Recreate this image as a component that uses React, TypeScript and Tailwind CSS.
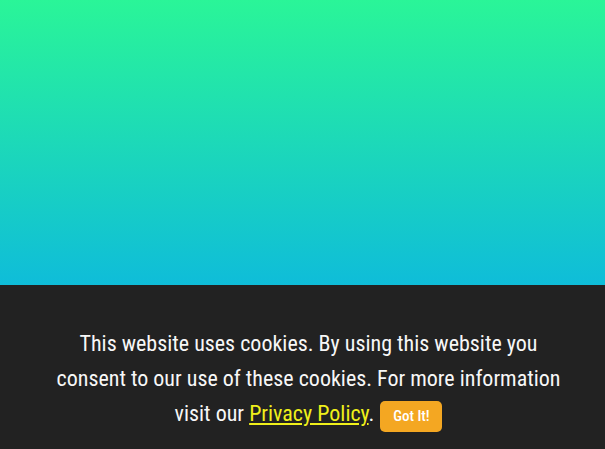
export default function App() {
  return (
    <div
      className="flex h-[449px] w-full flex-col overflow-hidden"
      style={{ fontFamily: '"Roboto Condensed", Roboto, "Liberation Sans", sans-serif' }}
    >
      <div className="flex-1 bg-[linear-gradient(to_bottom,#2af598_0px,#08aeea_360px)]" />
      <div className="h-[164px] shrink-0 bg-[#222222] pl-[12px] pt-[41px] text-center">
        <p className="whitespace-nowrap text-[22px] leading-[35px] text-[#f7f7f7] [font-stretch:75%]">
          This website uses cookies. By using this website you
          <br />
          consent to our use of these cookies. For more information
          <br />
          visit our{" "}
          <a href="#" className="text-[#f0f01a] underline underline-offset-2">
            Privacy Policy
          </a>
          .
          <button className="ml-[6px] inline-block h-[31px] w-[62px] rounded-[5px] bg-[#f4a722] align-[0px] text-[15px] font-medium leading-[31px] text-white [font-stretch:75%]">
            Got It!
          </button>
        </p>
      </div>
    </div>
  );
}
